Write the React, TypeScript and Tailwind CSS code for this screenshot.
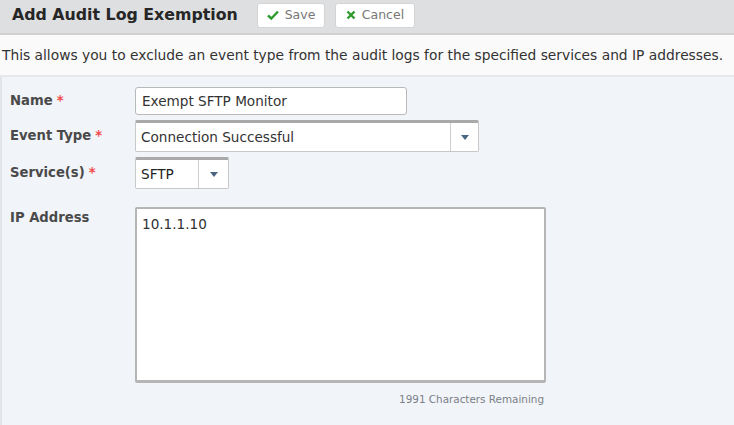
import React from 'react';

const font = { fontFamily: '"DejaVu Sans", Verdana, sans-serif' };

// ── Small pieces ─────────────────────────────────────────────────────────

const Caret: React.FC = () => (
  <svg width="8" height="5" viewBox="0 0 8 5">
    <path d="M0 0 H8 L4 5 Z" fill="#4a6684" />
  </svg>
);

const Label: React.FC<{ text: string; required?: boolean }> = ({ text, required }) => (
  <div className="w-[125px] shrink-0 text-[13.2px] font-bold text-[#4a4a4a]">
    {text}
    {required && <span className="ml-1 text-[#f04a4a]">*</span>}
  </div>
);

// ── Main component ───────────────────────────────────────────────────────

export default function App() {
  return (
    <div className="w-[734px] h-[425px] overflow-hidden bg-[#f1f4f9]" style={font}>
      {/* Header */}
      <div className="h-[35px] flex items-center bg-[#dedfe1] border-b-2 border-[#cfd0d2] pl-3 pb-[3px]">
        <h1 className="w-[245px] shrink-0 text-[15.8px] font-bold text-[#262626]">Add Audit Log Exemption</h1>
        <button className="h-[25px] w-[68px] flex items-center justify-center gap-[6px] bg-white rounded-[3px] border border-[#d4d4d4] text-[12.5px] text-[#777] mr-[10px]">
          <svg width="12" height="10" viewBox="0 0 12 10">
            <path d="M1 5.5 L4.3 8.5 L11 1.5" stroke="#2e9a2e" strokeWidth="2.4" fill="none" />
          </svg>
          Save
        </button>
        <button className="h-[25px] w-[80px] flex items-center justify-center gap-[6px] bg-white rounded-[3px] border border-[#d4d4d4] text-[12.5px] text-[#777]">
          <svg width="10" height="10" viewBox="0 0 10 10">
            <path d="M1.5 1.5 L8.5 8.5 M8.5 1.5 L1.5 8.5" stroke="#2e9a2e" strokeWidth="2.4" fill="none" />
          </svg>
          Cancel
        </button>
      </div>

      {/* Description */}
      <div className="h-[42px] flex items-center bg-[#fafafa] border-b-2 border-[#e6e8ec] pl-[2px] text-[13.8px] text-[#333] whitespace-nowrap">
        This allows you to exclude an event type from the audit logs for the specified services and IP addresses.
      </div>

      {/* Form */}
      <div className="border-l-2 border-[#e2e4e8] h-full pl-2 pt-[10px]">
        <div className="flex items-center h-[28px]">
          <Label text="Name" required />
          <div className="w-[272px] h-[28px] bg-white border border-[#b9b9b9] rounded-[3px] flex items-center px-[6px] text-[13.6px] text-[#333]">
            Exempt SFTP Monitor
          </div>
        </div>

        <div className="flex items-center h-[32px] mt-[5px]">
          <Label text="Event Type" required />
          <div className="w-[344px] h-[32px] bg-white border border-[#c8c8c8] border-t-[3px] border-t-[#a9a9a9] rounded-[2px] flex">
            <div className="flex-1 flex items-center px-[5px] text-[13.6px] text-[#333]">Connection Successful</div>
            <div className="w-[28px] border-l border-[#cfcfcf] flex items-center justify-center">
              <Caret />
            </div>
          </div>
        </div>

        <div className="flex items-center h-[32px] mt-[5px]">
          <Label text="Service(s)" required />
          <div className="w-[94px] h-[32px] bg-white border border-[#c8c8c8] border-t-[3px] border-t-[#a9a9a9] rounded-[2px] flex">
            <div className="flex-1 flex items-center px-[5px] text-[13.6px] text-[#222]">SFTP</div>
            <div className="w-[30px] border-l border-[#cfcfcf] flex items-center justify-center">
              <Caret />
            </div>
          </div>
        </div>

        <div className="flex items-start mt-[18px]">
          <div className="pt-[1px]">
            <Label text="IP Address" />
          </div>
          <div>
            <div className="w-[411px] h-[176px] bg-white border-2 border-[#b5b5b5] border-b-[3px] rounded-[2px] px-[5px] pt-[5px] text-[13.6px] text-[#333]">
              10.1.1.10
            </div>
            <div className="mt-[9px] pr-[2px] text-right text-[10.4px] text-[#7a7f88]">1991 Characters Remaining</div>
          </div>
        </div>
      </div>
    </div>
  );
}
